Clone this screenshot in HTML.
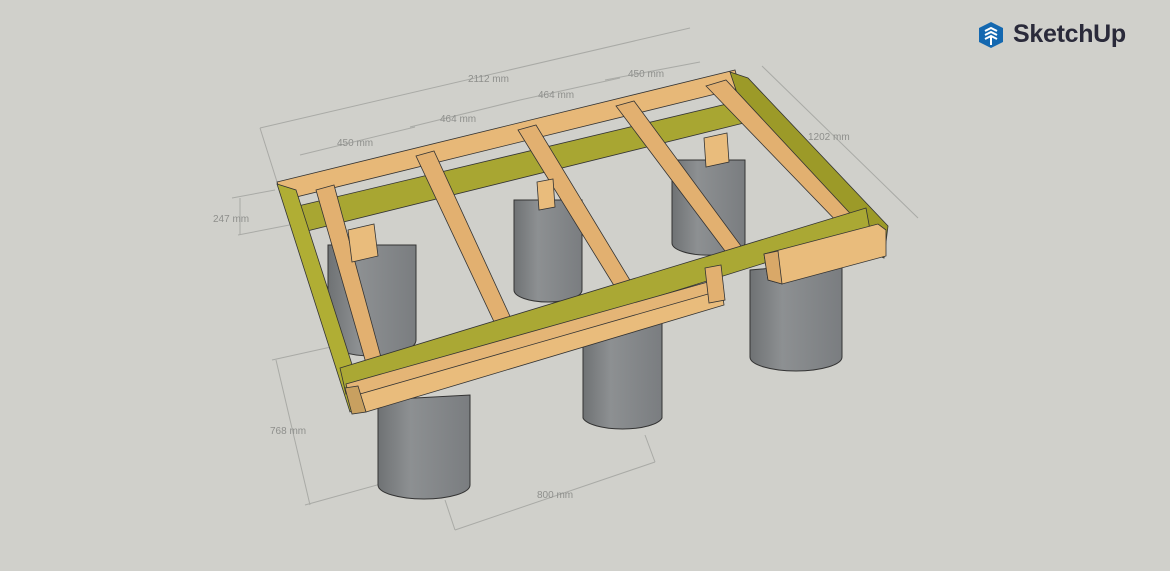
<!DOCTYPE html>
<html><head><style>
html,body{margin:0;padding:0;background:#d0d0cb;width:1170px;height:571px;overflow:hidden}
svg{position:absolute;left:0;top:0}
.logo{position:absolute;left:977px;top:20px;display:flex;align-items:center;font-family:"Liberation Sans",sans-serif;font-size:25px;color:#2a2a3a;letter-spacing:-0.3px;font-weight:bold}
</style></head><body>
<svg width="1170" height="571" viewBox="0 0 1170 571">
<defs>
<linearGradient id="cy" x1="0" x2="1"><stop offset="0" stop-color="#6f7274"/><stop offset=".35" stop-color="#8d9092"/><stop offset="1" stop-color="#7a7d80"/></linearGradient>
</defs>
<g stroke="#a9aaa6" stroke-width="1" fill="none">
<line x1="260" y1="128" x2="690" y2="28"/><line x1="260" y1="128" x2="278" y2="185"/>
<line x1="300" y1="155" x2="415" y2="127"/><line x1="410" y1="127" x2="520" y2="100"/><line x1="520" y1="100" x2="620" y2="78"/><line x1="605" y1="80" x2="700" y2="62"/>
<line x1="762" y1="66" x2="918" y2="218"/>
<line x1="232" y1="198" x2="275" y2="190"/><line x1="238" y1="235" x2="305" y2="222"/><line x1="240" y1="198" x2="240" y2="235"/>
<line x1="272" y1="360" x2="340" y2="345"/><line x1="276" y1="360" x2="310" y2="505"/><line x1="305" y1="505" x2="395" y2="480"/>
<line x1="455" y1="530" x2="655" y2="462"/><line x1="455" y1="530" x2="445" y2="500"/><line x1="655" y1="462" x2="645" y2="435"/>
</g>
<g font-family="Liberation Sans,sans-serif" font-size="10" fill="#8e8f8c">
<text x="468" y="82">2112 mm</text><text x="628" y="77">450 mm</text><text x="538" y="98">464 mm</text>
<text x="440" y="122">464 mm</text><text x="337" y="146">450 mm</text><text x="808" y="140">1202 mm</text>
<text x="213" y="222">247 mm</text><text x="270" y="434">768 mm</text><text x="537" y="498">800 mm</text>
</g>
<g stroke="#333" stroke-width="1" fill="url(#cy)">
<path d="M328 245 L328 340 A44 16 0 0 0 416 340 L416 245 Z"/>
<path d="M514 200 L514 290 A34 12 0 0 0 582 290 L582 200 Z"/>
<path d="M672 160 L672 243 A36 12 0 0 0 745 243 L745 160 Z"/>
</g>
<g stroke="#333" stroke-width="0.8">
<polygon points="277,182 735,70 740,88 284,200" fill="#e7b878"/>
<polygon points="298,206 752,98 756,120 303,232" fill="#a8a632"/>
<polygon points="730,72 748,78 888,226 884,258 870,252 738,96" fill="#9c9a28"/>
<polygon points="277,184 296,190 365,405 350,412" fill="#b0ae34"/>
<polygon points="416,156 434,151 520,338 504,343" fill="#e2b070"/>
<polygon points="518,130 536,125 642,300 626,305" fill="#e2b070"/>
<polygon points="616,106 634,101 744,250 728,255" fill="#e2b070"/>
<polygon points="706,86 726,80 860,224 845,230" fill="#e2b070"/>
<polygon points="316,190 334,185 385,372 370,377" fill="#e2b070"/>
<polygon points="348,230 374,224 378,256 352,262" fill="#e9bc7c"/>
<polygon points="537,182 553,179 555,207 539,210" fill="#e9bc7c"/>
<polygon points="704,138 727,133 729,162 706,167" fill="#e9bc7c"/>
</g>
<g stroke="#333" stroke-width="1" fill="url(#cy)">
<path d="M378 400 L378 485 A46 14 0 0 0 470 485 L470 395 Z"/>
<path d="M583 330 L583 418 A40 13 0 0 0 662 418 L662 322 Z"/>
<path d="M750 270 L750 357 A46 14 0 0 0 842 357 L842 262 Z"/>
</g>
<g stroke="#333" stroke-width="0.8">
<polygon points="340,368 866,208 870,230 346,394" fill="#aaa834"/>
<polygon points="346,384 722,278 724,300 352,408" fill="#e4b576"/>
<polygon points="360,394 722,290 724,305 366,412" fill="#e9bc7c"/>
<polygon points="705,268 721,265 725,300 709,303" fill="#e2b070"/>
<polygon points="764,254 878,224 886,230 886,256 782,284 768,280" fill="#e9bc7c"/>
<polygon points="764,254 778,251 782,284 768,280" fill="#d9a868"/>
<polygon points="345,388 358,386 366,412 352,414" fill="#c8a060"/>
</g>
</svg>
<div class="logo">
<svg width="28" height="28" viewBox="0 0 28 28" style="position:static;margin-right:8px"><path d="M14 1 L26 7 L26 21 L14 27 L2 21 L2 7 Z" fill="#1468b0"/><path d="M8 10 L14 7 L20 10 M8 14 L14 11 L20 14 M8 18 L14 15 L20 18 M14 15 L14 24" stroke="#fff" stroke-width="2" fill="none"/></svg>SketchUp</div>
</body></html>
